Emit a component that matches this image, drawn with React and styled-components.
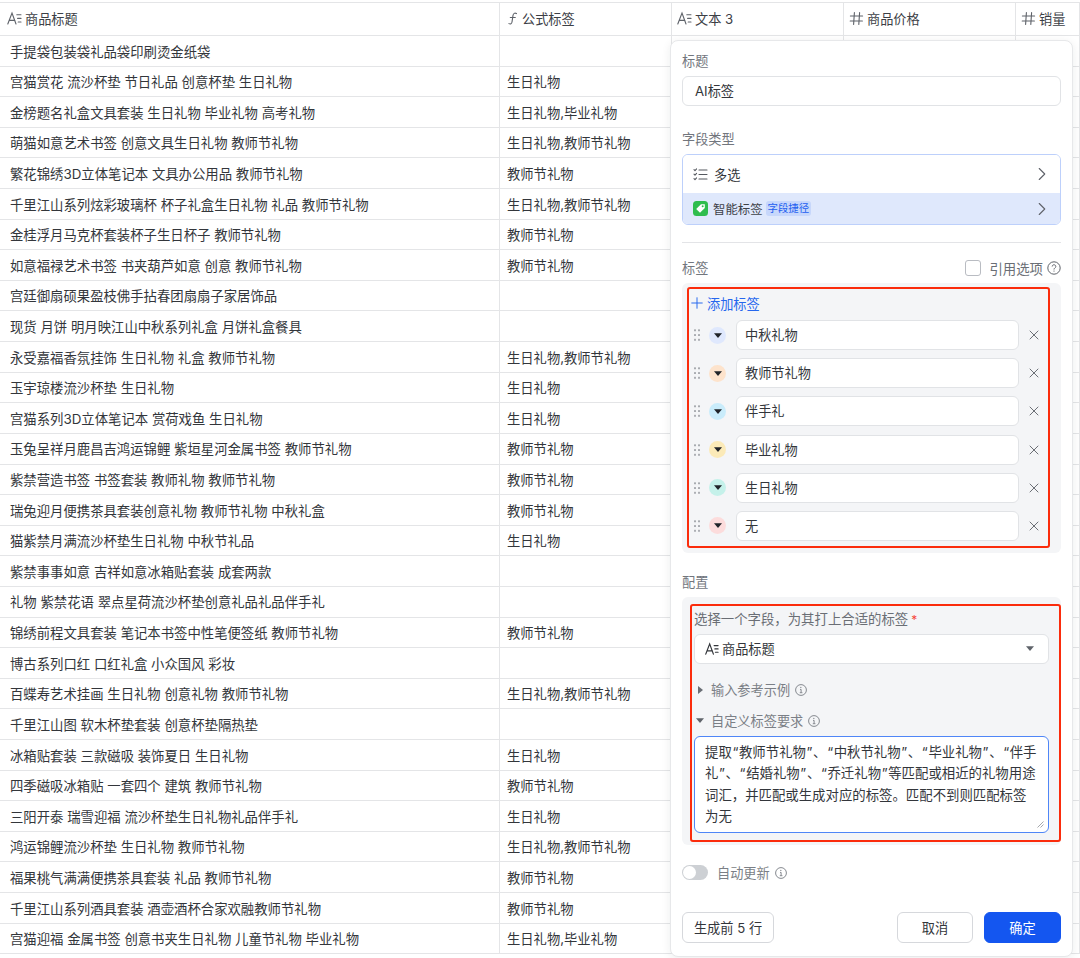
import React from 'react';
import styled, { createGlobalStyle } from 'styled-components';
import { ChevronRight, Plus, X } from 'lucide-react';

const Global = createGlobalStyle`
  html, body { margin: 0; padding: 0; background: #fff; overflow: hidden; }
  * { box-sizing: border-box; }
  body { font-family: Inter, "Noto Sans CJK SC", sans-serif; font-size: 13.2px; color: #1f2329; }
`;

const Page = styled.div`position: relative; width: 1080px; height: 958px; overflow: hidden; padding-top: 2px;`;
const Table = styled.div`display: flex; flex-direction: column; border-top: 1px solid #e4e5e7;`;
const Row = styled.div`
  display: grid; grid-template-columns: 500px 172px 172px 172px 64px;
  height: ${p => (p.$head ? '33px' : '30.62px')};
  border-bottom: 1px solid #e4e5e7;
`;
const Cell = styled.div`
  display: flex; align-items: center; padding: 0.4px 0 0 ${p => p.$first ? '10px' : '7px'};
  font-size: ${p => p.$first ? '13.36px' : '13.3px'};
  color: #33363b; white-space: nowrap; overflow: hidden;
  border-right: 1px solid #e4e5e7;
`;
const HeadCell = styled(Cell)`
  padding: 0 0 2px ${p => p.$first ? '7px' : '5px'}; gap: 3px; color: #3c4046;
  font-size: 13.2px;
`;

const Panel = styled.div`
  position: absolute; left: 670px; top: 40px; width: 403px; height: 917px;
  background: #fff; border: 1px solid #e7e8ea; border-radius: 8px;
  box-shadow: 0 2px 10px rgba(31, 35, 41, .08);
  padding: 11px 11px 0 11px; display: flex; flex-direction: column;
`;
const Label = styled.div`
  height: 18px; line-height: 18px; color: #72767d; margin-top: ${p => p.$top || 0}px;
`;
const LabelBar = styled.div`display: flex; justify-content: space-between; align-items: center; margin-top: 16px; height: 18px;`;
const RefOption = styled.div`display: flex; align-items: center; color: #6a6e75; font-size: 13.4px;`;
const Checkbox = styled.span`width: 16px; height: 16px; border: 1px solid #b9bcc2; border-radius: 3px; margin-right: 8px; background: #fff;`;
const TextInput = styled.div`
  height: 30px; margin-top: 6px; padding: 0 0 1px 12px; display: flex; align-items: center;
  background: #fff; border: 1px solid #e1e3e6; border-radius: 6px; color: #33363b;
`;
const TypeBox = styled.div`
  margin-top: 6px; height: 71px; border: 1px solid #bdd0fb; border-radius: 6px; overflow: hidden;
  display: flex; flex-direction: column;
`;
const TypeRow = styled.div`
  display: flex; align-items: center; padding: 0 7px 0 10px;
  height: ${p => p.$h}px; background: ${p => p.$bg || '#fff'}; color: #33363b; gap: ${p => p.$gap}px;
`;
const Grow = styled.span`flex: 1;`;
const Badge = styled.span`
  height: 15px; line-height: 15px; padding: 0 2px; border-radius: 3px; margin-left: -2px;
  background: #c7d7fb; color: #1d5ef0; font-size: 10.4px;
`;
const SmallText = styled.span`font-size: 12.4px; color: #3d4148;`;
const Divider = styled.div`height: 1px; background: #e3e4e7; margin-top: 17px;`;

const GrayBox = styled.div`
  position: relative; margin-top: 6px; background: #f4f5f7; border-radius: 6px;
  padding: ${p => p.$pad}; display: flex; flex-direction: column;
`;
const RedMark = styled.div`
  position: absolute; left: ${p => p.$l}px; top: ${p => p.$t}px; right: ${p => p.$r}px; bottom: ${p => p.$b}px;
  border: 2px solid #fb2c0c; border-radius: 3px; pointer-events: none;
`;
const AddTag = styled.div`display: flex; align-items: center; height: 18px; gap: 1px; color: #2667ee; margin: -1px 0 7px -6px;`;
const TagList = styled.div`display: flex; flex-direction: column; gap: 8.2px; margin-top: 1px;`;
const TagRow = styled.div`display: flex; align-items: center; height: 30px;`;
const Swatch = styled.span`
  width: 17px; height: 17px; border-radius: 50%; background: ${p => p.$c}; margin-left: 9px;
  display: flex; align-items: center; justify-content: center;
`;
const TagInput = styled(TextInput)`width: 283px; margin: 0 0 0 10px; padding-left: 8px;`;
const Close = styled.span`display: flex; margin-left: 7px; color: #61656c;`;

const FieldLabel = styled.div`height: 18px; line-height: 18px; color: #6a6e75; font-size: 13.4px;`;
const Req = styled.span`color: #f5463a; margin-left: 3px; font-size: 12px;`;
const Select = styled.div`
  height: 30px; margin-top: 6px; padding: 0 14px 0 10px; background: #fff; border: 1px solid #e1e3e6; border-radius: 6px;
  display: flex; align-items: center; gap: 3px; color: #33363b;
`;
const Disclosure = styled.div`
  display: flex; align-items: center; height: 18px; color: #7b7f86;
  margin-top: ${p => p.$top}px; gap: 5px;
`;
const Caret = styled.span`display: flex; width: 12px; justify-content: center;`;
const Prompt = styled.div`
  position: relative; margin-top: 6px; height: 97px; padding: 5px 10px; background: #fff;
  border: 1px solid #4f86f7; border-radius: 6px; line-height: 21.3px; color: #33363b;
  white-space: nowrap; font-size: 13.4px;
`;
const Quote = styled.span`padding: 0 .65px;`;
const Grip = styled.svg`position: absolute; right: 4px; bottom: 4px;`;
const ToggleRow = styled.div`display: flex; align-items: center; height: 16px; margin-top: 20px; color: #7b7f86;`;
const Toggle = styled.span`
  position: relative; width: 26px; height: 15px; border-radius: 8px; background: #cdd0d4; margin-right: 9px;
  &::after { content: ''; position: absolute; left: 1px; top: 1px; width: 13px; height: 13px; border-radius: 50%; background: #fff; }
`;
const Footer = styled.div`display: flex; align-items: center; margin-top: 31px; gap: 11px;`;
const Btn = styled.div`
  height: 31px; width: ${p => p.$w}px; display: flex; align-items: center; justify-content: center;
  border-radius: 6px; border: 1px solid ${p => p.$primary ? '#1456f0' : '#d6d8dc'};
  background: ${p => p.$primary ? '#1456f0' : '#fff'}; color: ${p => p.$primary ? '#fff' : '#33363b'};
`;
const InfoWrap = styled.span`display: flex; margin-left: ${p => p.$m || 0}px;`;

const TextIcon = ({ s = 15, c = '#5f636a', w = 1.1 }) => (
  <svg width={s} height={s} viewBox="0 0 15 15" fill="none" stroke={c} strokeWidth={w} strokeLinecap="round">
    <path d="M.8 13 5 2l4 11M2.3 9.4h5.6" />
    <path d="M9.8 3.8h4.2M10.6 7.4h3.4M11.2 11h2.8" />
  </svg>
);
const FormulaIcon = () => (
  <svg width="12" height="15" viewBox="1.5 0 12 15" fill="none" stroke="#5f636a" strokeWidth="1.1" strokeLinecap="round">
    <path d="M11 2.6C9.2 1.6 7.9 2.4 7.5 4.4l-1 6.6c-.3 1.8-1.6 2.5-3 1.6M4.8 6.5h5" />
  </svg>
);
const HashIcon = () => (
  <svg width="15" height="15" viewBox="0 0 15 15" fill="none" stroke="#5f636a" strokeWidth="1.1" strokeLinecap="round">
    <path d="M5.4 1.6 4.6 13.4M10.6 1.6l-.8 11.8M1.4 5h12.2M1.2 10h12.2" />
  </svg>
);
const ListIcon = () => (
  <svg width="15" height="15" viewBox="0 0 15 15" fill="none" stroke="#55595f" strokeWidth="1.1" strokeLinecap="round" strokeLinejoin="round">
    <path d="M6 3h8M6 7.5h8M6 12h8" />
    <path d="M1 2.6l1 1 1.6-1.8M1 7.1l1 1 1.6-1.8M1 11.6l1 1 1.6-1.8" />
  </svg>
);
const TagLogo = () => (
  <svg width="15" height="15" viewBox="0 0 15 15">
    <rect width="15" height="15" rx="3.5" fill="#2fbd4e" />
    <path d="M8 3.2h3.8v3.8L7 11.8 3.2 8z" fill="#fff" />
    <circle cx="9.7" cy="5.3" r="1" fill="#2fbd4e" />
  </svg>
);
const Dots = () => (
  <svg width="6" height="12" viewBox="0 0 6 12" fill="#a8abb0">
    {[1.2, 6, 10.8].flatMap(y => [<rect key={`a${y}`} x="0" y={y - 1} width="2" height="2" rx=".5" />, <rect key={`b${y}`} x="4" y={y - 1} width="2" height="2" rx=".5" />])}
  </svg>
);
const Tri = ({ c = '#1f2329', w = 8, h = 5, right }) => (
  <svg width={right ? h : w} height={right ? w : h} viewBox={right ? '0 0 5 7' : '0 0 7 5'} preserveAspectRatio="none">
    <path d={right ? 'M0 0 5 3.5 0 7z' : 'M0 .2h7L3.5 5z'} fill={c} />
  </svg>
);
const Info = () => (
  <svg width="12" height="12" viewBox="0 0 12 12" fill="none" stroke="#85898f" strokeWidth="1">
    <circle cx="6" cy="6" r="5.4" />
    <path d="M5.2 3.4h1v.4M5 5.4h1.1v3.2M4.8 8.7h2.6" />
  </svg>
);
const Help = () => (
  <svg width="14" height="14" viewBox="0 0 14 14" fill="none" stroke="#5f636a" strokeWidth="1">
    <circle cx="7" cy="7" r="6.2" />
    <path d="M5.2 5.5c0-2.3 3.6-2.3 3.6 0 0 1.5-1.8 1.4-1.8 3M7 9.6v1" />
  </svg>
);

const rows = [
  ['手提袋包装袋礼品袋印刷烫金纸袋', ''],
  ['宫猫赏花 流沙杯垫 节日礼品 创意杯垫 生日礼物', '生日礼物'],
  ['金榜题名礼盒文具套装 生日礼物 毕业礼物 高考礼物', '生日礼物,毕业礼物'],
  ['萌猫如意艺术书签 创意文具生日礼物 教师节礼物', '生日礼物,教师节礼物'],
  ['繁花锦绣3D立体笔记本 文具办公用品 教师节礼物', '教师节礼物'],
  ['千里江山系列炫彩玻璃杯 杯子礼盒生日礼物 礼品 教师节礼物', '生日礼物,教师节礼物'],
  ['金桂浮月马克杯套装杯子生日杯子 教师节礼物', '教师节礼物'],
  ['如意福禄艺术书签 书夹葫芦如意 创意 教师节礼物', '教师节礼物'],
  ['宫廷御扇硕果盈枝佛手拈春团扇扇子家居饰品', ''],
  ['现货 月饼 明月映江山中秋系列礼盒 月饼礼盒餐具', ''],
  ['永受嘉福香氛挂饰 生日礼物 礼盒 教师节礼物', '生日礼物,教师节礼物'],
  ['玉宇琼楼流沙杯垫 生日礼物', '生日礼物'],
  ['宫猫系列3D立体笔记本 赏荷戏鱼 生日礼物', '生日礼物'],
  ['玉兔呈祥月鹿昌吉鸿运锦鲤 紫垣星河金属书签 教师节礼物', '教师节礼物'],
  ['紫禁营造书签 书签套装 教师礼物 教师节礼物', '教师节礼物'],
  ['瑞兔迎月便携茶具套装创意礼物 教师节礼物 中秋礼盒', '教师节礼物'],
  ['猫紫禁月满流沙杯垫生日礼物 中秋节礼品', '生日礼物'],
  ['紫禁事事如意 吉祥如意冰箱贴套装 成套两款', ''],
  ['礼物 紫禁花语 翠点星荷流沙杯垫创意礼品礼品伴手礼', ''],
  ['锦绣前程文具套装 笔记本书签中性笔便签纸 教师节礼物', '教师节礼物'],
  ['博古系列口红 口红礼盒 小众国风 彩妆', ''],
  ['百蝶寿艺术挂画 生日礼物 创意礼物 教师节礼物', '生日礼物,教师节礼物'],
  ['千里江山图 软木杯垫套装 创意杯垫隔热垫', ''],
  ['冰箱贴套装 三款磁吸 装饰夏日 生日礼物', '生日礼物'],
  ['四季磁吸冰箱贴 一套四个 建筑 教师节礼物', '教师节礼物'],
  ['三阳开泰 瑞雪迎福 流沙杯垫生日礼物礼品伴手礼', '生日礼物'],
  ['鸿运锦鲤流沙杯垫 生日礼物 教师节礼物', '生日礼物,教师节礼物'],
  ['福果桃气满满便携茶具套装 礼品 教师节礼物', '教师节礼物'],
  ['千里江山系列酒具套装 酒壶酒杯合家欢融教师节礼物', '教师节礼物'],
  ['宫猫迎福 金属书签 创意书夹生日礼物 儿童节礼物 毕业礼物', '生日礼物,毕业礼物'],
];

const tags = [
  ['中秋礼物', '#dfe8fd'],
  ['教师节礼物', '#fde3cc'],
  ['伴手礼', '#c9ecfb'],
  ['毕业礼物', '#fbeab8'],
  ['生日礼物', '#c5f1ea'],
  ['无', '#fcdcdc'],
];

const Q = ({ children }) => <Quote>{children}</Quote>;

export default function App() {
  return (
    <Page>
      <Global />
      <Table>
        <Row $head>
          <HeadCell $first><TextIcon />商品标题</HeadCell>
          <HeadCell $first><FormulaIcon />公式标签</HeadCell>
          <HeadCell><TextIcon />文本 3</HeadCell>
          <HeadCell><HashIcon />商品价格</HeadCell>
          <HeadCell><HashIcon />销量</HeadCell>
        </Row>
        {rows.map(([title, tag]) => (
          <Row key={title}>
            <Cell $first>{title}</Cell>
            <Cell>{tag}</Cell>
            <Cell />
            <Cell />
            <Cell />
          </Row>
        ))}
      </Table>

      <Panel>
        <Label>标题</Label>
        <TextInput>AI标签</TextInput>
        <Label $top={24}>字段类型</Label>
        <TypeBox>
          <TypeRow $h={39} $gap={6}>
            <ListIcon /><span>多选</span><Grow /><ChevronRight size={22} strokeWidth={1.2} color="#5f636a" />
          </TypeRow>
          <TypeRow $h={31} $bg="#dfe8fc" $gap={5}>
            <TagLogo /><SmallText>智能标签</SmallText><Badge>字段捷径</Badge><Grow /><ChevronRight size={22} strokeWidth={1.2} color="#5f636a" />
          </TypeRow>
        </TypeBox>
        <Divider />
        <LabelBar>
          <Label>标签</Label>
          <RefOption><Checkbox />引用选项<InfoWrap $m={4}><Help /></InfoWrap></RefOption>
        </LabelBar>
        <GrayBox $pad="12px 12px 12px 12px">
          <RedMark $l={5} $t={4} $r={11} $b={5} />
          <AddTag><Plus size={18} strokeWidth={1.3} />添加标签</AddTag>
          <TagList>
            {tags.map(([name, color]) => (
              <TagRow key={name}>
                <Dots />
                <Swatch $c={color}><Tri /></Swatch>
                <TagInput>{name}</TagInput>
                <Close><X size={16} strokeWidth={1.4} /></Close>
              </TagRow>
            ))}
          </TagList>
        </GrayBox>
        <Label $top={20}>配置</Label>
        <GrayBox $pad="13px 12px 12px 12px">
          <RedMark $l={8} $t={7} $r={0} $b={3} />
          <FieldLabel>选择一个字段，为其打上合适的标签<Req>*</Req></FieldLabel>
          <Select>
            <TextIcon s={14} c="#33363b" w={1.3} />商品标题<Grow /><Tri c="#5f636a" w={8} h={5} />
          </Select>
          <Disclosure $top={17}>
            <Caret><Tri right c="#6a6e75" w={8} h={5} /></Caret>输入参考示例<Info />
          </Disclosure>
          <Disclosure $top={13}>
            <Caret><Tri c="#5f636a" w={8} h={5} /></Caret>自定义标签要求<Info />
          </Disclosure>
          <Prompt>
            提取<Q>“</Q>教师节礼物<Q>”</Q>、<Q>“</Q>中秋节礼物<Q>”</Q>、<Q>“</Q>毕业礼物<Q>”</Q>、<Q>“</Q>伴手<br />
            礼<Q>”</Q>、<Q>“</Q>结婚礼物<Q>”</Q>、<Q>“</Q>乔迁礼物<Q>”</Q>等匹配或相近的礼物用途<br />
            词汇，并匹配或生成对应的标签。匹配不到则匹配标签<br />
            为无
            <Grip width="7" height="7" viewBox="0 0 7 7" stroke="#9a9da3" strokeWidth="0.9"><path d="M.5 6.5l6-6M3.5 6.5l3-3" /></Grip>
          </Prompt>
        </GrayBox>
        <ToggleRow>
          <Toggle />自动更新<InfoWrap $m={5}><Info /></InfoWrap>
        </ToggleRow>
        <Footer>
          <Btn $w={92}>生成前 5 行</Btn>
          <Grow />
          <Btn $w={76}>取消</Btn>
          <Btn $w={77} $primary>确定</Btn>
        </Footer>
      </Panel>
    </Page>
  );
}
